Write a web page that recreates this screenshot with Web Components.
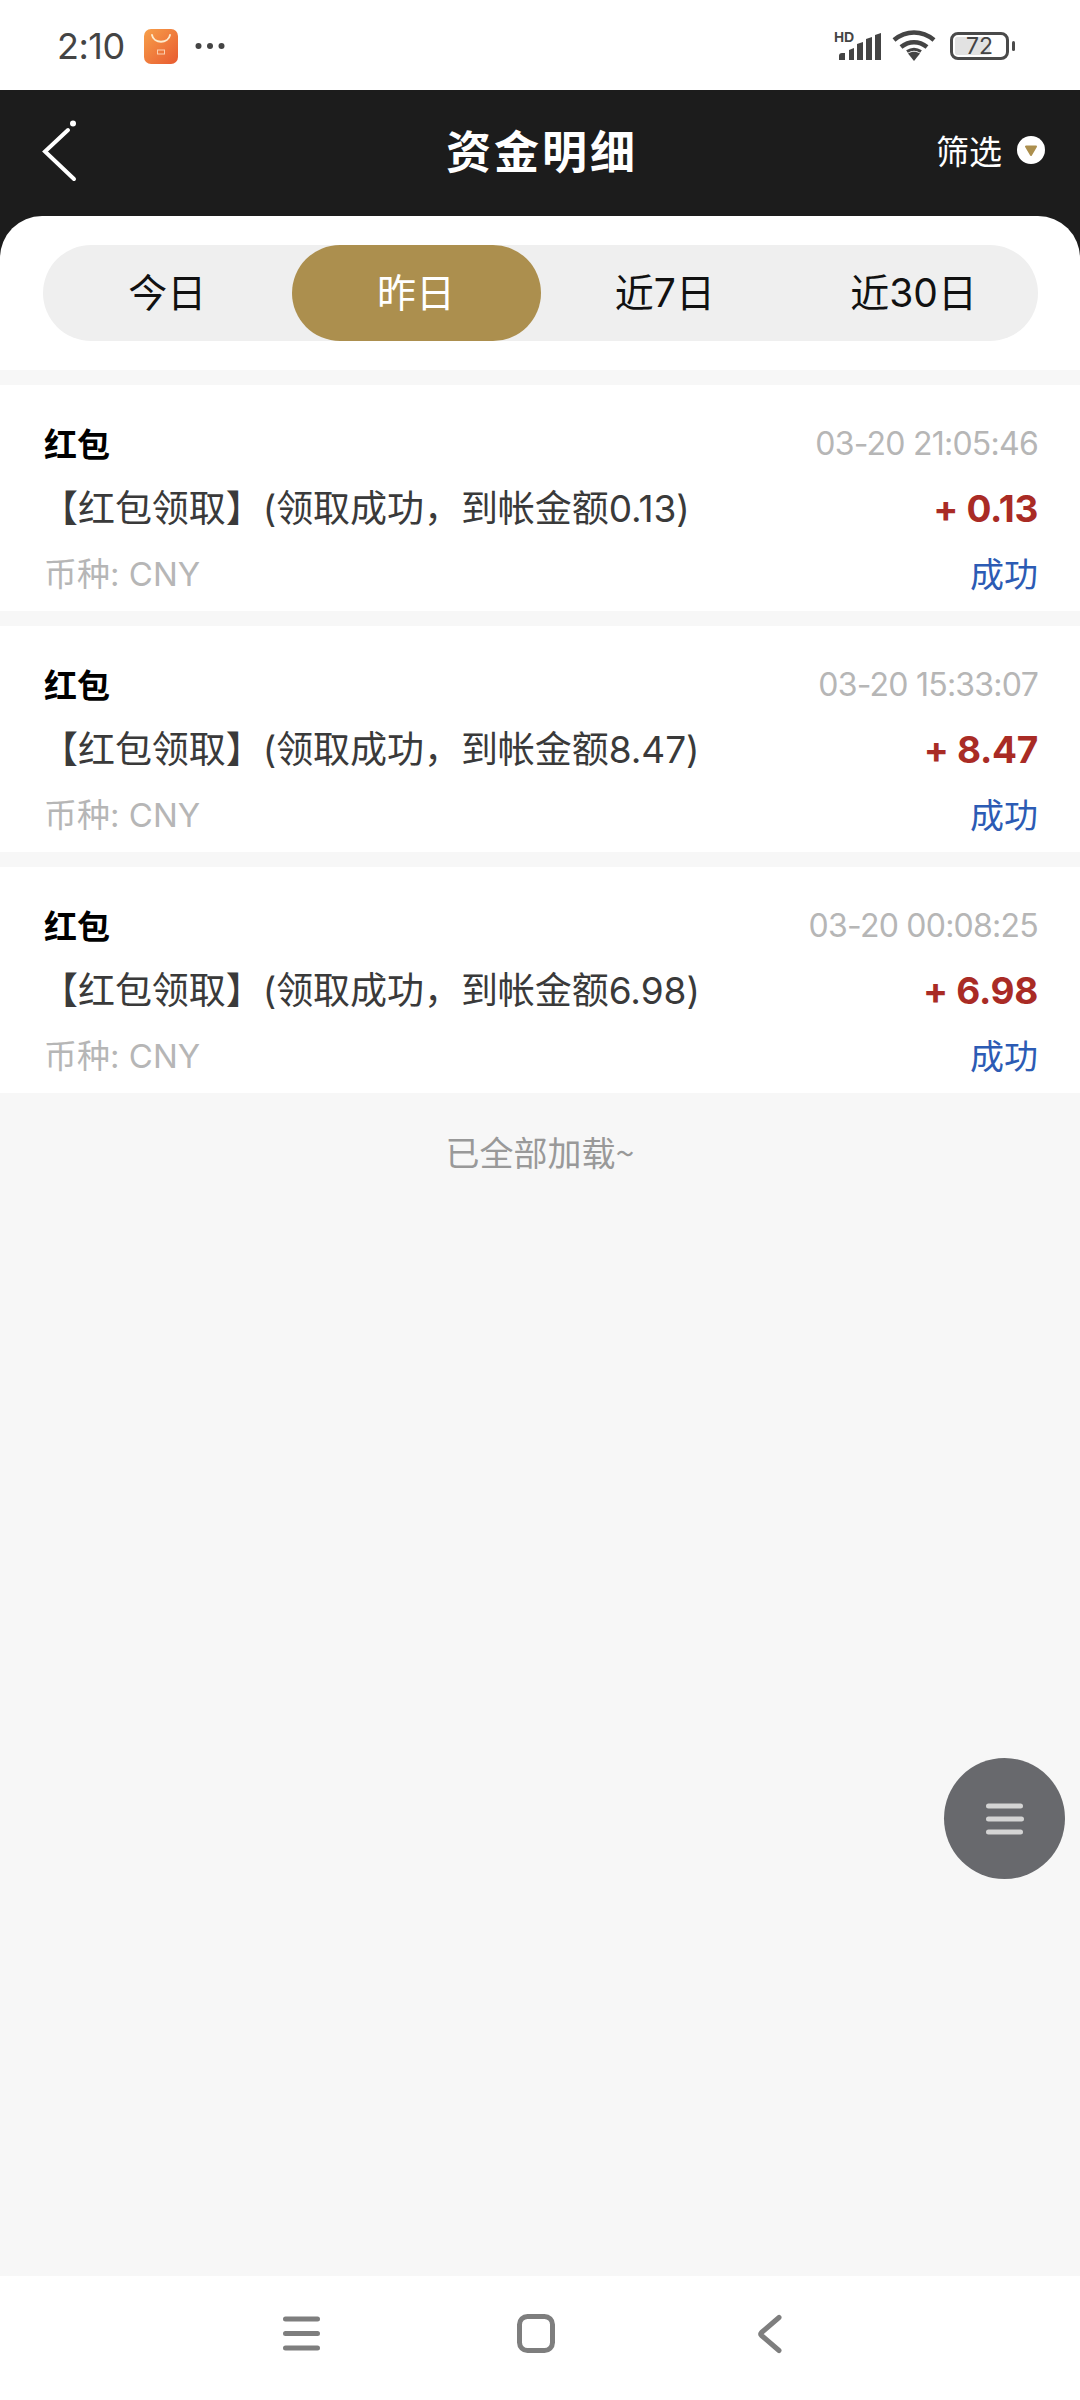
<!DOCTYPE html>
<html lang="zh-CN">
<head>
<meta charset="utf-8">
<title>资金明细</title>
<style>
  html, body { margin: 0; padding: 0; }
  body { width: 1080px; height: 2400px; overflow: hidden; background: #f7f7f7;
    font-family: Inter, "Noto Sans CJK SC", sans-serif; }
  #app { position: relative; display: flex; flex-direction: column; height: 2400px; }
  #list { flex: 1; display: flex; flex-direction: column; }
</style>
</head>
<body>
<div id="app">
  <status-bar time="2:10" level="72"></status-bar>
  <top-header filter="筛选">资金明细</top-header>
  <range-tabs active="1">
    <span>今日</span><span>昨日</span><span>近7日</span><span>近30日</span>
  </range-tabs>
  <div id="list">
    <ledger-row kind="红包" when="03-20 21:05:46" amount="+ 0.13" currency="CNY" state="成功">【红包领取】(领取成功，到帐金额0.13)</ledger-row>
    <ledger-row kind="红包" when="03-20 15:33:07" amount="+ 8.47" currency="CNY" state="成功">【红包领取】(领取成功，到帐金额8.47)</ledger-row>
    <ledger-row kind="红包" when="03-20 00:08:25" amount="+ 6.98" currency="CNY" state="成功">【红包领取】(领取成功，到帐金额6.98)</ledger-row>
    <end-note>已全部加载~</end-note>
  </div>
  <float-menu></float-menu>
  <nav-bar></nav-bar>
</div>

<script>
// Phone status line: clock, shop notification, signal, wifi, battery
class StatusBar extends HTMLElement {
  constructor() {
    super();
    this.attachShadow({ mode: 'open' });
    this.shadowRoot.innerHTML = `
    <style>
      :host { display: flex; align-items: center; height: 90px; background: #fff; box-sizing: border-box; padding: 2px 0 0 57px; color: #444; flex: none; }
      .time { font: 400 36px/1 Inter, sans-serif; width: 67px; letter-spacing: -.5px; white-space: nowrap; }
      .app { margin-left: 20px; width: 34px; height: 35px; display: block; }
      .dots { margin-left: 17px; width: 30px; height: 8px; display: block; }
      .right { margin-left: auto; margin-right: 65px; display: flex; align-items: center; }
      .signal { width: 47px; height: 34px; margin-top: -6px; display: block; }
      .wifi { width: 44px; height: 32px; display: block; margin-left: 11px; }
      .batt { position: relative; width: 59px; height: 28px; margin-left: 14px; box-sizing: border-box; border: 3px solid #4a4a4a; border-radius: 8px; }
      .batt i { position: absolute; left: 2px; top: 2px; bottom: 2px; width: 35px; background: #e2e2e2; border-radius: 2px; }
      .batt b { position: absolute; left: 13px; top: 0; font: 400 23px/22px Inter, sans-serif; color: #444; }
      .cap { width: 3px; height: 10px; background: #4a4a4a; border-radius: 2px; margin-left: 3px; }
    </style>
    <span class="time">${this.getAttribute('time')}</span>
    <svg class="app" viewBox="0 0 34 35">
      <defs><linearGradient id="g" x1="0" y1="0" x2="1" y2="1"><stop offset="0" stop-color="#f7a04a"/><stop offset="1" stop-color="#e85a30"/></linearGradient></defs>
      <rect width="34" height="35" rx="7" fill="url(#g)"/>
      <path d="M8 6c1.500 9 16.500 9 18 0" fill="none" stroke="#fdeccf" stroke-width="1.800" stroke-linecap="round"/>
      <rect x="13.500" y="21" width="7" height="4" fill="none" stroke="#fbd0b0" stroke-width="1"/>
    </svg>
    <svg class="dots" viewBox="0 0 30 8" fill="#444"><circle cx="3.500" cy="4" r="3"/><circle cx="15" cy="4" r="3"/><circle cx="26.500" cy="4" r="3"/></svg>
    <div class="right">
      <svg class="signal" viewBox="0 -6 47 34" fill="#444">
        <text x="0" y="10" font-family="Liberation Sans, sans-serif" font-weight="700" font-size="14">HD</text>
        <path d="M5 28v-4q0-3 3-3h3v7zM15 28v-10l5-2v12zM23 28v-16l6-2v18zM32 28v-21l6-2v23zM41 28v-25l6-2v27z"/>
      </svg>
      <svg class="wifi" viewBox="0 0 44 32" fill="none" stroke="#444" stroke-width="4.500">
        <path d="M2 10c12-10 28-10 40 0"/><path d="M9 17c8-6.500 18-6.500 26 0"/>
        <path d="M16 23.500c4-2.500 8-2.500 12 0L22 31z" fill="#444" stroke="none"/>
        <path d="M15 21.500c4.500-3 9.500-3 14 0" stroke-width="3"/>
      </svg>
      <div class="batt"><i></i><b>${this.getAttribute('level')}</b></div>
      <div class="cap"></div>
    </div>`;
  }
}
customElements.define('status-bar', StatusBar);

// Dark title bar with back arrow and filter toggle
class TopHeader extends HTMLElement {
  constructor() {
    super();
    this.attachShadow({ mode: 'open' });
    this.shadowRoot.innerHTML = `
    <style>
      :host { display: grid; grid-template-columns: 1fr auto 1fr; align-items: center; height: 126px; box-sizing: border-box; padding: 0 35px 6px 42px; background: #1c1c1c; color: #fff; flex: none; }
      svg.back { width: 36px; height: 64px; display: block; margin-top: 1px; }
      .title { font: 700 45px/1 "Noto Sans CJK SC", sans-serif; letter-spacing: 3px; margin: -1px 3px 0 0; }
      .filter { justify-self: end; display: flex; align-items: center; gap: 15px; font: 400 33px/1 "Noto Sans CJK SC", sans-serif; }
      .dot { width: 28px; height: 28px; border-radius: 50%; background: #fff; display: flex; align-items: center; justify-content: center; }
      .dot svg { width: 14px; height: 13px; display: block; }
    </style>
    <svg class="back" viewBox="0 0 36 64" fill="none" stroke="#fff" stroke-linecap="round">
      <path d="M26 11 3 32.500 32 60" stroke-width="4"/>
      <circle cx="31" cy="4.500" r="3" fill="#fff" stroke="none"/>
    </svg>
    <span class="title"><slot></slot></span>
    <div class="filter"><span>${this.getAttribute('filter')}</span>
      <span class="dot"><svg viewBox="0 0 14 13"><path d="M2 2.500h10L7 11z" fill="#ac8f4e" stroke="#ac8f4e" stroke-width="2" stroke-linejoin="round"/></svg></span>
    </div>`;
  }
}
customElements.define('top-header', TopHeader);

// Date range switcher, white sheet with rounded top over the header
class RangeTabs extends HTMLElement {
  constructor() {
    super();
    this.attachShadow({ mode: 'open' });
    this.shadowRoot.innerHTML = `
    <style>
      :host { display: block; background: #1c1c1c; flex: none; }
      .sheet { background: #fff; border-radius: 42px 42px 0 0; padding: 29px 42px 29px 43px; }
      .track { display: flex; height: 96px; border-radius: 48px; background: #efefef; }
      ::slotted(span) { flex: 1; display: flex; align-items: center; justify-content: center; padding-bottom: 2px; box-sizing: border-box; border-radius: 48px; font: 400 39px/1 Inter, "Noto Sans CJK SC", sans-serif; color: #111; }
      ::slotted(span.on) { background: #ac8f4e; color: #fff; }
    </style>
    <div class="sheet"><div class="track"><slot></slot></div></div>`;
  }
  connectedCallback() {
    const tabs = this.querySelectorAll('span');
    tabs[Number(this.getAttribute('active'))].classList.add('on');
  }
}
customElements.define('range-tabs', RangeTabs);

// One entry of the money log
class LedgerRow extends HTMLElement {
  constructor() {
    super();
    this.attachShadow({ mode: 'open' });
    const a = (n) => this.getAttribute(n);
    this.shadowRoot.innerHTML = `
    <style>
      :host { display: flex; flex-direction: column; height: 226px; box-sizing: border-box; padding: 34px 42px 0 44px; margin-top: 15px; background: #fff; font-family: Inter, "Noto Sans CJK SC", sans-serif; flex: none; }
      .line { display: flex; justify-content: space-between; align-items: center; }
      .one { height: 48px; }
      .two { height: 48px; margin-top: 17px; }
      .three { height: 48px; margin-top: 18px; }
      .kind { font: 700 33px/1 "Noto Sans CJK SC", sans-serif; color: #000; }
      .when { font: 400 32px/1 Inter, sans-serif; letter-spacing: -.76px; color: #b6b6b6; margin-top: 2px; }
      .desc { font: 400 37px/1 Inter, "Noto Sans CJK SC", sans-serif; letter-spacing: -.05px; color: #3a3a3a; margin-left: -3px; }
      .amount { font: 700 37px/1 Inter, sans-serif; letter-spacing: -.3px; color: #a92b25; }
      .cur { font: 400 33px/1 Inter, "Noto Sans CJK SC", sans-serif; color: #b6b6b6; }
      .state { font: 400 34px/1 "Noto Sans CJK SC", sans-serif; color: #2c5bb4; margin-top: -2px; }
    </style>
    <div class="line one"><span class="kind">${a('kind')}</span><span class="when">${a('when')}</span></div>
    <div class="line two"><span class="desc"><slot></slot></span><span class="amount">${a('amount')}</span></div>
    <div class="line three"><span class="cur">币种: ${a('currency')}</span><span class="state">${a('state')}</span></div>`;
  }
}
customElements.define('ledger-row', LedgerRow);

class EndNote extends HTMLElement {
  constructor() {
    super();
    this.attachShadow({ mode: 'open' });
    this.shadowRoot.innerHTML = `
    <style>
      :host { display: block; text-align: center; padding-top: 39px; font: 400 34px/40px "Noto Sans CJK SC", sans-serif; color: #999; }
    </style>
    <slot></slot>`;
  }
}
customElements.define('end-note', EndNote);

// Round floating button over the list
class FloatMenu extends HTMLElement {
  constructor() {
    super();
    this.attachShadow({ mode: 'open' });
    this.shadowRoot.innerHTML = `
    <style>
      :host { position: absolute; left: 944px; top: 1758px; width: 121px; height: 121px; border-radius: 50%; background: #68696d; display: flex; align-items: center; justify-content: center; }
      svg { width: 38px; height: 32px; display: block; }
    </style>
    <svg viewBox="0 0 38 32" stroke="#d4d4d4" stroke-width="5" stroke-linecap="round">
      <path d="M2.500 3h32M2.500 16h33M2.500 29h32"/>
    </svg>`;
  }
}
customElements.define('float-menu', FloatMenu);

// System navigation keys
class NavBar extends HTMLElement {
  constructor() {
    super();
    this.attachShadow({ mode: 'open' });
    this.shadowRoot.innerHTML = `
    <style>
      :host { display: flex; align-items: flex-start; height: 124px; box-sizing: border-box; background: #fff; padding: 34px 0 0 281px; flex: none; }
      svg { display: block; }
    </style>
    <svg width="40" height="46" viewBox="0 0 40 46" fill="none" stroke="#7e7e7e" stroke-width="5" stroke-linecap="round">
      <path d="M4.500 9h32M4.500 23.500h32M4.500 38h32"/>
    </svg>
    <svg style="margin-left:196px" width="38" height="46" viewBox="0 0 38 46" fill="none" stroke="#7e7e7e" stroke-width="5">
      <rect x="2.500" y="6.500" width="33" height="34" rx="8"/>
    </svg>
    <svg style="margin-left:203px" width="26" height="46" viewBox="0 0 26 46" fill="none" stroke="#7e7e7e" stroke-width="5" stroke-linecap="round" stroke-linejoin="round">
      <path d="M21 7.500 3.500 22.500q-1.500 1.500 0 3L21 40.500"/>
    </svg>`;
  }
}
customElements.define('nav-bar', NavBar);
</script>
</body>
</html>
